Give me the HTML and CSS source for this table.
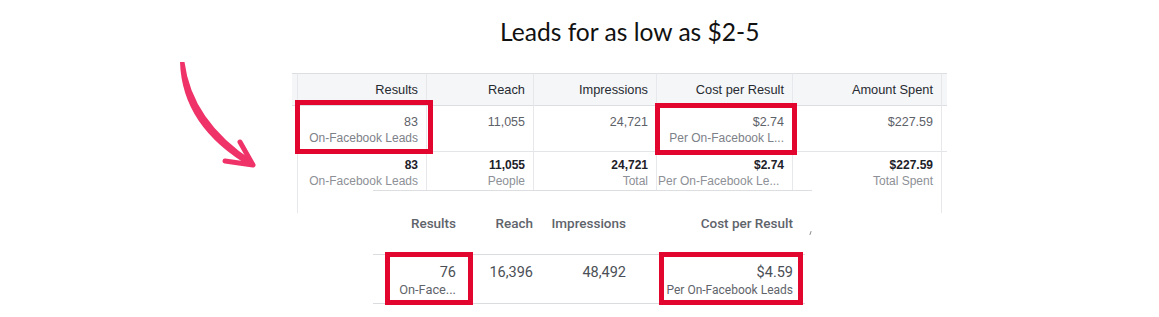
FILE: index.html
```html
<!DOCTYPE html>
<html>
<head>
<meta charset="utf-8">
<link rel="stylesheet" href="styles.css">
</head>
<body>
<div class="page">
  <h1 class="title">Leads for as low as $2-5</h1>

  <svg class="arrow" width="100" height="120" viewBox="160 55 100 120">
    <path d="M180 62 Q182 127 251 167 L253 161 Q192 121 184.5 62 Z" fill="#ef3268"/>
    <path d="M240 142 L253 165 L225 161" fill="none" stroke="#ef3268" stroke-width="5" stroke-linecap="round" stroke-linejoin="round"/>
  </svg>

  <div class="fbt">
    <div class="h c0"></div>
    <div class="h">Results</div>
    <div class="h">Reach</div>
    <div class="h">Impressions</div>
    <div class="h">Cost per Result</div>
    <div class="h">Amount Spent</div>
    <div class="h c7"></div>

    <div class="d c0"></div>
    <div class="d"><span class="num">83</span><span class="sub">On-Facebook Leads</span><i class="box b1"></i></div>
    <div class="d"><span class="num">11,055</span></div>
    <div class="d"><span class="num">24,721</span></div>
    <div class="d"><span class="num">$2.74</span><span class="sub">Per On-Facebook L...</span><i class="box b2"></i></div>
    <div class="d"><span class="num">$227.59</span></div>
    <div class="d c7"></div>

    <div class="t c0"></div>
    <div class="t"><b>83</b><span class="sub">On-Facebook Leads</span></div>
    <div class="t"><b>11,055</b><span class="sub">People</span></div>
    <div class="t"><b>24,721</b><span class="sub">Total</span></div>
    <div class="t tl"><b>$2.74</b><span class="sub">Per On-Facebook Le...</span></div>
    <div class="t"><b>$227.59</b><span class="sub">Total Spent</span></div>
    <div class="t c7"></div>
  </div>

  <div class="panel">
    <div class="gt">
      <div class="gh">Results</div>
      <div class="gh">Reach</div>
      <div class="gh">Impressions</div>
      <div class="gh last">Cost per Result</div>
      <div class="gd"><span class="gnum">76</span><span class="gsub">On-Face...</span><i class="box b3"></i></div>
      <div class="gd"><span class="gnum">16,396</span></div>
      <div class="gd"><span class="gnum">48,492</span></div>
      <div class="gd last"><span class="gnum">$4.59</span><span class="gsub">Per On-Facebook Leads</span><i class="box b4"></i></div>
    </div>
    <span class="tick"></span>
  </div>
</div>
</body>
</html>
```

FILE: styles.css
```css
* { box-sizing: border-box; }
html, body { margin: 0; padding: 0; background: #fff; }
.page {
  position: relative;
  width: 1159px;
  height: 317px;
  overflow: hidden;
}
.title {
  margin: 0;
  height: 73px;
  padding: 15px 0 0 500px;
  font-family: Lato, "Open Sans", sans-serif;
  font-weight: 400;
  font-size: 24.6px;
  line-height: 34px;
  color: #111;
}
.arrow {
  position: absolute;
  left: 160px;
  top: 55px;
}

/* top (Ads Manager) table */
.fbt {
  display: grid;
  grid-template-columns: 5px 129px 107px 123px 136px 149px 6px;
  grid-template-rows: 33px 46px 61px;
  margin-left: 292px;
  width: 655px;
  font-family: "Liberation Sans", Arial, sans-serif;
  font-size: 12px;
}
.fbt > div {
  position: relative;
  border-left: 1px solid #e6e8eb;
  text-align: right;
  padding-right: 8px;
}
.fbt > .c0 { border-left: none; padding: 0; }
.fbt > .c7 { padding: 0; }
.h {
  background: #f5f6f7;
  border-top: 1px solid #dcdee1;
  border-bottom: 1px solid #dcdee1;
  line-height: 31px;
  font-size: 12.8px;
  color: #262a31;
}
.d {
  border-bottom: 1px solid #e3e5e8;
  padding-top: 8px;
  line-height: 16px;
  color: #5d6168;
}
.d .num { font-size: 12.5px; }
.d.c0 { border-bottom: none; }
.t {
  padding-top: 5px;
  line-height: 16px;
}
.t b { display: block; color: #1d2129; font-weight: 700; }
.t.tl { text-align: left; padding-left: 1px; padding-right: 0; white-space: nowrap; }
.t.tl b { text-align: right; padding-right: 8px; }
.num { display: block; }
.sub { display: block; color: #8d9096; white-space: nowrap; }
.d .sub { color: #7d8188; }

.box {
  position: absolute;
  z-index: 5;
  border: 5px solid #e2062e;
  pointer-events: none;
}
.b1 { left: -3px; right: -7px; top: -6px; bottom: -3px; }
.b2 { left: -2px; right: -5px; top: -3px; bottom: -4px; }

/* bottom (second) screenshot over the first */
.panel {
  position: absolute;
  z-index: 10;
  left: 373px;
  top: 190px;
  width: 439px;
  height: 127px;
  background: #fff;
  border-top: 1px solid #dcdee1;
}
.gt {
  display: grid;
  grid-template-columns: 93px 77px 93px 169px;
  grid-template-rows: 64px 49px;
  width: 432px;
  font-family: Roboto, "Noto Sans", sans-serif;
}
.gh {
  border-bottom: 1px solid #dadce0;
  text-align: right;
  padding: 23px 10px 0 0;
  font-size: 13.5px;
  font-weight: 500;
  line-height: 18px;
  color: #5f646b;
}
.gd {
  position: relative;
  border-bottom: 1px solid #dadce0;
  text-align: right;
  padding: 9px 10px 0 0;
  color: #4b4f56;
}
.gh.last, .gd.last { padding-right: 12px; }
.gnum { display: block; font-size: 14.5px; line-height: 17px; }
.gsub { display: block; font-size: 12.8px; line-height: 18px; color: #5f646b; white-space: nowrap; }
.gd.last .gsub { font-size: 12px; }
.b3 { left: 12px; right: -7px; top: -3px; bottom: -2px; }
.b4 { left: 23px; right: 2px; top: -3px; bottom: -2px; }
.tick {
  position: absolute;
  left: 437px;
  top: 40px;
  width: 1px;
  height: 4px;
  background: #888;
  transform: rotate(20deg);
}
```
